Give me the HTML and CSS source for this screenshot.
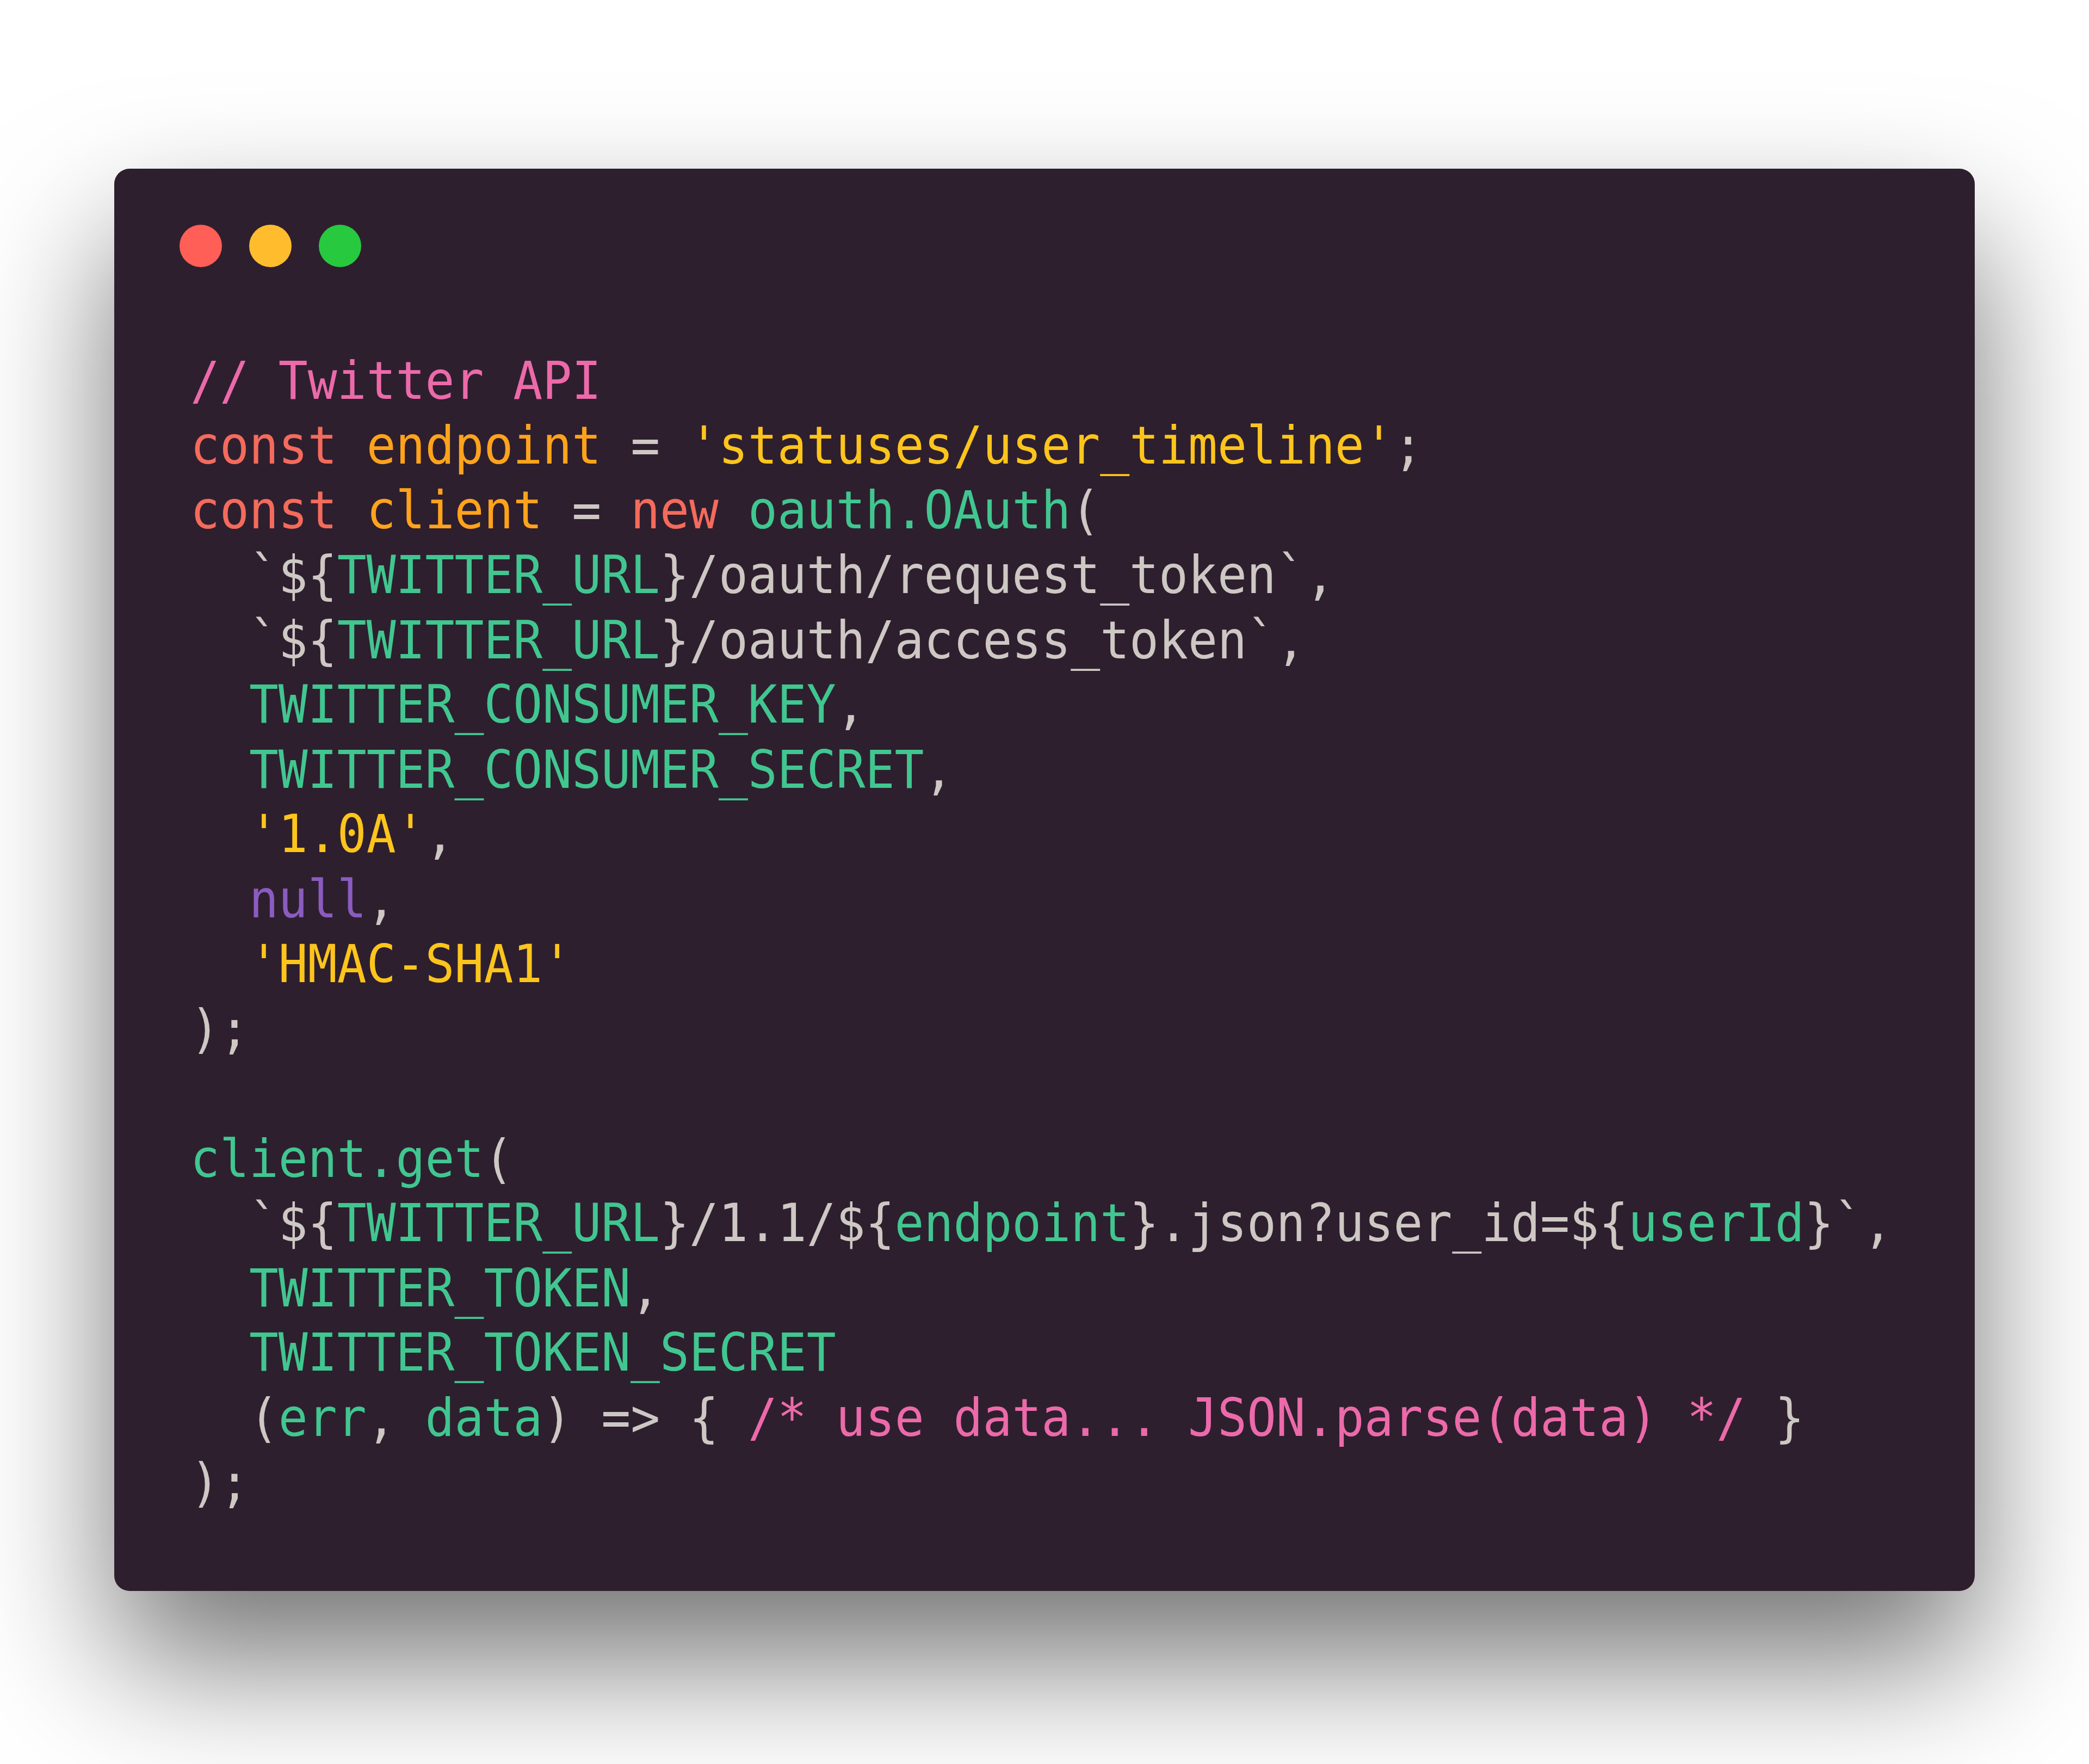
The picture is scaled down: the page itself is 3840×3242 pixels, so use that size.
FILE: index.html
```html
<!DOCTYPE html>
<html>
<head>
<meta charset="utf-8">
<link rel="stylesheet" href="styles.css">
</head>
<body>
<div class="stage">
  <div class="window">
    <div class="controls">
      <span class="dot red"></span>
      <span class="dot yellow"></span>
      <span class="dot green"></span>
    </div>
<pre class="code"><span class="c">// Twitter API</span>
<span class="k">const</span> <span class="v">endpoint</span> <span class="p">=</span> <span class="s">'statuses/user_timeline'</span><span class="p">;</span>
<span class="k">const</span> <span class="v">client</span> <span class="p">=</span> <span class="k">new</span> <span class="g">oauth.OAuth</span><span class="p">(</span>
  <span class="p">`${</span><span class="g">TWITTER_URL</span><span class="p">}/oauth/request_token`,</span>
  <span class="p">`${</span><span class="g">TWITTER_URL</span><span class="p">}/oauth/access_token`,</span>
  <span class="g">TWITTER_CONSUMER_KEY</span><span class="p">,</span>
  <span class="g">TWITTER_CONSUMER_SECRET</span><span class="p">,</span>
  <span class="s">'1.0A'</span><span class="p">,</span>
  <span class="n">null</span><span class="p">,</span>
  <span class="s">'HMAC-SHA1'</span>
<span class="p">);</span>

<span class="g">client.get</span><span class="p">(</span>
  <span class="p">`${</span><span class="g">TWITTER_URL</span><span class="p">}/1.1/${</span><span class="g">endpoint</span><span class="p">}.json?user_id=${</span><span class="g">userId</span><span class="p">}`,</span>
  <span class="g">TWITTER_TOKEN</span><span class="p">,</span>
  <span class="g">TWITTER_TOKEN_SECRET</span>
  <span class="p">(</span><span class="g">err</span><span class="p">,</span> <span class="g">data</span><span class="p">) =&gt; {</span> <span class="c">/* use data... JSON.parse(data) */</span> <span class="p">}</span>
<span class="p">);</span></pre>
  </div>
</div>
</body>
</html>
```

FILE: styles.css
```css
html, body {
  margin: 0;
  padding: 0;
  background: #ffffff;
}

.stage {
  padding: 310px 0 318px 210px;
}

.window {
  box-sizing: border-box;
  width: 3420px;
  height: 2614px;
  padding: 103px 0 0 120px;
  background: #2e1f2f;
  border-radius: 28px;
  box-shadow: 0 128px 435px rgba(0, 0, 0, 0.55);
}

.controls {
  display: flex;
  gap: 50px;
  height: 78px;
}

.dot {
  display: block;
  width: 78px;
  height: 78px;
  border-radius: 50%;
}

.red { background: #ff5f56; }
.yellow { background: #ffbd2e; }
.green { background: #27c93f; }

.code {
  margin: 149px 0 0 20px;
  font-family: "DejaVu Sans Mono", monospace;
  font-size: 89.6px;
  line-height: 110.63px;
  white-space: pre;
  color: #cdc8c3;
  transform: scaleY(1.077);
  transform-origin: 0 0;
}

.c { color: #ec6aa9; }
.k { color: #f46b5c; }
.v { color: #ffa31c; }
.s { color: #fdc51c; }
.g { color: #41c690; }
.p { color: #cdc8c3; }
.n { color: #8a5cbf; }
```
